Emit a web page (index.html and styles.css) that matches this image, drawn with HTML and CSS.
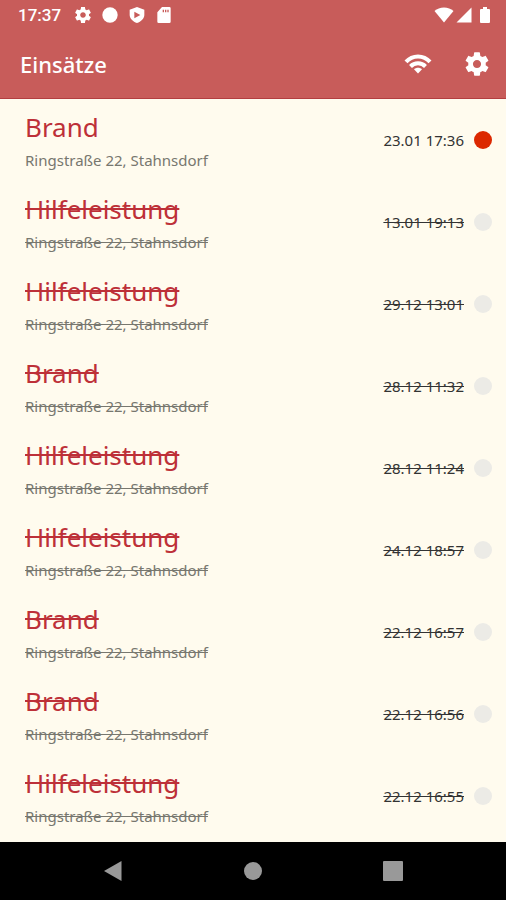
FILE: index.html
```
<!DOCTYPE html>
<html lang="de">
<head>
    <meta charset="UTF-8">
    <meta name="viewport" content="width=device-width, initial-scale=1.0">
    <title>Einsätze</title>
    <link rel="stylesheet" href="styles.css">
</head>
<body>
    <svg class="defs" aria-hidden="true">
        <symbol id="gear" viewBox="0 0 24 24">
            <path d="M19.43 12.98c.04-.32.07-.64.07-.98s-.03-.66-.07-.98l2.11-1.65c.19-.15.24-.42.12-.64l-2-3.46c-.12-.22-.39-.3-.61-.22l-2.49 1c-.52-.4-1.08-.73-1.69-.98l-.38-2.65C14.46 2.18 14.25 2 14 2h-4c-.25 0-.46.18-.49.42l-.38 2.65c-.61.25-1.17.59-1.69.98l-2.49-1c-.23-.09-.49 0-.61.22l-2 3.46c-.13.22-.07.49.12.64l2.11 1.65c-.04.32-.07.65-.07.98s.03.66.07.98l-2.11 1.65c-.19.15-.24.42-.12.64l2 3.46c.12.22.39.3.61.22l2.49-1c.52.4 1.08.73 1.69.98l.38 2.65c.03.24.24.42.49.42h4c.25 0 .46-.18.49-.42l.38-2.65c.61-.25 1.17-.59 1.69-.98l2.49 1c.23.09.49 0 .61-.22l2-3.46c.12-.22.07-.49-.12-.64l-2.11-1.65zM12 15.5c-1.93 0-3.5-1.57-3.5-3.5s1.57-3.5 3.5-3.5 3.5 1.57 3.5 3.5-1.57 3.5-3.5 3.5z"/>
        </symbol>
    </svg>

    <header class="header">
        <div class="statusbar">
            <span class="clock">17:37</span>
            <div class="status-left">
                <svg class="icon-status" viewBox="2 2 20 20"><use href="#gear" width="24" height="24"/></svg>
                <svg class="icon-status" viewBox="0 0 24 24"><circle cx="12" cy="12" r="11.5"/></svg>
                <svg class="icon-status" viewBox="0 0 24 24"><path fill-rule="evenodd" d="M12 0L1 4v8c0 5.500 5 10 11 12 6-2 11-6.500 11-12V4zM8 7v10l9-5z"/></svg>
                <svg class="icon-status" viewBox="0 0 24 24"><path fill-rule="evenodd" d="M20 0H9L2 8v14a2 2 0 0 0 2 2h16a2 2 0 0 0 2-2V2a2 2 0 0 0-2-2zM10 4h2v4h-2zM13.500 4h2v4h-2zM17 4h2v4h-2z"/></svg>
            </div>
            <div class="status-right">
                <svg width="20" height="16" viewBox="0 0 20 16"><path d="M10 15.500L.5 4C3 1.800 6.300.5 10 .5s7 1.300 9.500 3.500z"/></svg>
                <svg width="16" height="16" viewBox="0 0 16 16"><path d="M15.500.5v15H.5z"/></svg>
                <svg class="battery" width="10" height="16" viewBox="0 0 10 16"><path d="M3 0h4v2h2a1 1 0 0 1 1 1v12a1 1 0 0 1-1 1H1a1 1 0 0 1-1-1V3a1 1 0 0 1 1-1h2z"/></svg>
            </div>
        </div>
        <div class="toolbar">
            <h1>Einsätze</h1>
            <button type="button" class="btn-icon" aria-label="Verbindung">
                <svg width="28" height="20" viewBox="0 0 28 20">
                    <path class="arc" d="M2 7.800C8.500.6 19.500.6 26 7.800"/>
                    <path class="arc" d="M6.500 12.500c4-4.200 11-4.200 15 0"/>
                    <path d="M14 19.500l-4-4.200c2.300-2 5.700-2 8 0z"/>
                </svg>
            </button>
            <button type="button" class="btn-icon" aria-label="Einstellungen">
                <svg width="28" height="28" viewBox="0 0 24 24"><use href="#gear"/></svg>
            </button>
        </div>
    </header>

    <main>
        <ul class="list">
            <li class="item active">
                <div class="info"><h2>Brand</h2><p>Ringstraße 22, Stahnsdorf</p></div>
                <time>23.01 17:36</time><span class="dot"></span>
            </li>
            <li class="item">
                <div class="info"><h2>Hilfeleistung</h2><p>Ringstraße 22, Stahnsdorf</p></div>
                <time>13.01 19:13</time><span class="dot"></span>
            </li>
            <li class="item">
                <div class="info"><h2>Hilfeleistung</h2><p>Ringstraße 22, Stahnsdorf</p></div>
                <time>29.12 13:01</time><span class="dot"></span>
            </li>
            <li class="item">
                <div class="info"><h2>Brand</h2><p>Ringstraße 22, Stahnsdorf</p></div>
                <time>28.12 11:32</time><span class="dot"></span>
            </li>
            <li class="item">
                <div class="info"><h2>Hilfeleistung</h2><p>Ringstraße 22, Stahnsdorf</p></div>
                <time>28.12 11:24</time><span class="dot"></span>
            </li>
            <li class="item">
                <div class="info"><h2>Hilfeleistung</h2><p>Ringstraße 22, Stahnsdorf</p></div>
                <time>24.12 18:57</time><span class="dot"></span>
            </li>
            <li class="item">
                <div class="info"><h2>Brand</h2><p>Ringstraße 22, Stahnsdorf</p></div>
                <time>22.12 16:57</time><span class="dot"></span>
            </li>
            <li class="item">
                <div class="info"><h2>Brand</h2><p>Ringstraße 22, Stahnsdorf</p></div>
                <time>22.12 16:56</time><span class="dot"></span>
            </li>
            <li class="item">
                <div class="info"><h2>Hilfeleistung</h2><p>Ringstraße 22, Stahnsdorf</p></div>
                <time>22.12 16:55</time><span class="dot"></span>
            </li>
        </ul>
    </main>

    <nav class="navbar">
        <button type="button" aria-label="Zurück">
            <svg width="20" height="22" viewBox="0 0 20 22"><path d="M18.500 1v20L1 11z"/></svg>
        </button>
        <button type="button" aria-label="Startseite">
            <svg width="20" height="20" viewBox="0 0 20 20"><circle cx="10" cy="10" r="9"/></svg>
        </button>
        <button type="button" aria-label="Übersicht">
            <svg width="20" height="20" viewBox="0 0 20 20"><rect width="20" height="20" rx="1"/></svg>
        </button>
    </nav>
</body>
</html>
```
FILE: styles.css
```
* { margin: 0; padding: 0; box-sizing: border-box; }
body {
    font-family: 'Noto Sans', 'Open Sans', sans-serif;
    background: #fffbee; min-height: 100vh; display: flex; flex-direction: column;
}
svg { display: block; fill: currentColor; }
button { border: none; background: none; color: inherit; cursor: pointer; }
.defs { position: absolute; width: 0; height: 0; }

/* Header */
.header { background: #c85c5a; color: #fff; border-bottom: 1px solid #b33e40; }
.statusbar { display: flex; align-items: center; height: 30px; padding: 0 16px 0 18px; }
.clock { font-family: Roboto, sans-serif; font-size: 17px; font-weight: 500; line-height: 24px; }
.status-left { display: flex; gap: 11px; margin-left: 14px; }
.icon-status { width: 16px; height: 16px; }
.status-right { display: flex; gap: 2px; margin-left: auto; }
.battery { margin-left: 6px; }
.toolbar { display: flex; align-items: center; height: 68px; padding: 0 15px 0 20px; gap: 31px; }
.toolbar h1 { flex: 1; font-size: 22px; font-weight: 500; line-height: 32px; }
.arc { fill: none; stroke: currentColor; stroke-width: 4; }

/* Einsatzliste */
main { flex: 1; }
.list { list-style: none; }
.item { display: flex; align-items: center; height: 82px; padding: 0 14px 0 25px; }
.item h2, .item p, .item time { text-decoration: line-through; }
.info { flex: 1; padding-top: 4px; }
.item h2 { color: #bd3038; font-size: 26px; font-weight: 400; line-height: 36px; }
.item p { color: #77776f; font-size: 15px; line-height: 30px; }
.item time { color: #333; font-size: 15px; line-height: 24px; }
.dot { width: 18px; height: 18px; margin-left: 10px; border-radius: 50%; background: #ecebe6; }
.item.active h2, .item.active p, .item.active time { text-decoration: none; }
.active .dot { background: #dc2800; }

/* Navigation */
.navbar {
    display: flex; align-items: center; justify-content: center; gap: 120px;
    height: 58px; background: #000; color: #999;
}
```
